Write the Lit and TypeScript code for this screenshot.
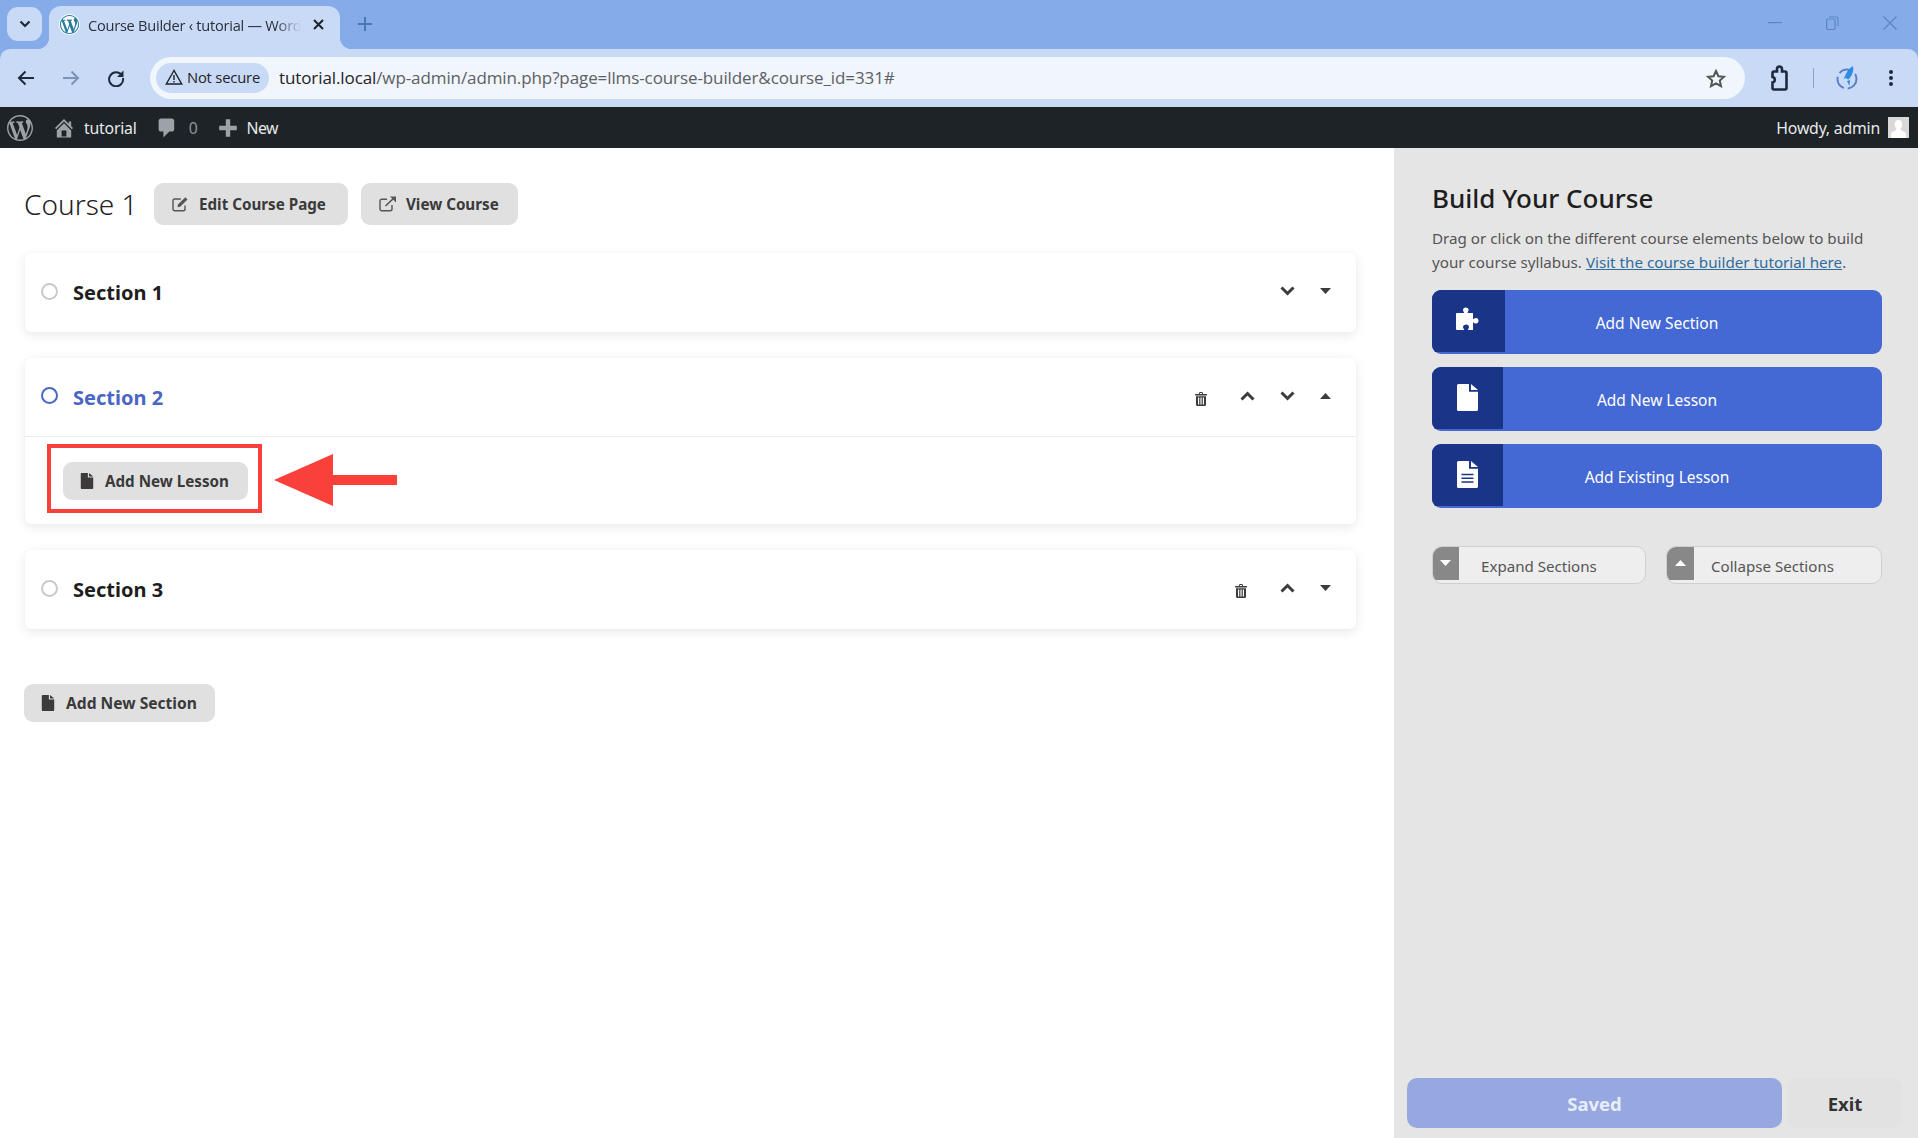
import { LitElement, html, css, svg } from "lit";
import { customElement } from "lit/decorators.js";

const WP = svg`<path d="M20 10c0-5.51-4.49-10-10-10C4.48 0 0 4.49 0 10c0 5.52 4.48 10 10 10 5.51 0 10-4.48 10-10zM7.78 15.37L4.37 6.22c.55-.02 1.17-.08 1.17-.08.5-.06.44-1.13-.06-1.11 0 0-1.45.11-2.37.11-.18 0-.37 0-.58-.01C4.12 2.69 6.87 1.11 10 1.11c2.33 0 4.45.87 6.05 2.34-.68-.11-1.65.39-1.65 1.58 0 .74.45 1.36.9 2.1.35.61.55 1.36.55 2.46 0 1.49-1.4 5-1.4 5l-3.03-8.37c.54-.02.82-.17.82-.17.5-.05.44-1.25-.06-1.22 0 0-1.44.12-2.38.12-.87 0-2.33-.12-2.33-.12-.5-.03-.56 1.2-.06 1.22l.92.08 1.26 3.41zM17.41 10c.24-.64.74-1.87.43-4.25.7 1.29 1.05 2.71 1.05 4.25 0 3.29-1.73 6.24-4.4 7.78.97-2.59 1.94-5.2 2.92-7.78zM6.1 18.09C3.12 16.65 1.11 13.53 1.11 10c0-1.3.23-2.48.72-3.59C3.25 10.3 4.67 14.2 6.1 18.09zm4.03-6.63l2.58 6.98c-.86.29-1.76.45-2.71.45-.79 0-1.57-.11-2.29-.33.81-2.38 1.62-4.74 2.42-7.1z"/>`;

const fileIcon = (w: number, h: number, fill: string) => html`<svg width=${w} height=${h} viewBox="0 0 14 18"><path fill=${fill} d="M1 0h7v5.2h6V17a1 1 0 0 1-1 1H1a1 1 0 0 1-1-1V1a1 1 0 0 1 1-1zM9.3 0L14 4H9.3z"/></svg>`;
const fileLines = html`<svg width="23" height="27" viewBox="0 0 14 18"><path fill="#fff" fill-rule="evenodd" d="M1 0h7v5.2h6V17a1 1 0 0 1-1 1H1a1 1 0 0 1-1-1V1a1 1 0 0 1 1-1zM3 8.5v1h8v-1zM3 11v1h8v-1zM3 13.5v1h8v-1zM9.3 0L14 4H9.3z"/></svg>`;
const puzzle = html`<svg width="25" height="24" viewBox="0 0 25 24"><path fill="#fff" d="M1 6h6.6c.5 0 .6-.4.3-.8C7.3 4.500 7 3.900 7 3.100 7 1.400 8.200.5 9.800.5s2.800.9 2.800 2.600c0 .8-.3 1.400-.9 2.100-.3.400-.2.800.3.800H17v5.600c0 .5.400.6.800.3.700-.6 1.300-.9 2.100-.9 1.700 0 2.600 1.200 2.600 2.800s-.9 2.800-2.600 2.800c-.8 0-1.400-.3-2.100-.9-.4-.3-.8-.2-.8.3V23h-4.600c-.5 0-.6-.4-.3-.8.600-.7.900-1.300.9-2.100 0-1.700-1.200-2.600-2.800-2.600S7 18.400 7 20.100c0 .8.300 1.400.900 2.100.3.400.2.800-.3.800H1a1 1 0 0 1-1-1V7a1 1 0 0 1 1-1z"/></svg>`;
const chevUp = html`<svg class="ic" width="15" height="10" viewBox="0 0 15 10"><polyline points="1.500,8.500 7.500,2.500 13.500,8.500" fill="none" stroke="#3c3c3c" stroke-width="3"/></svg>`;
const chevDown = html`<svg class="ic" width="15" height="10" viewBox="0 0 15 10"><polyline points="1.500,1.500 7.500,7.500 13.500,1.500" fill="none" stroke="#3c3c3c" stroke-width="3"/></svg>`;
const caretUp = html`<svg class="ic" width="11" height="6" viewBox="0 0 11 6"><path fill="#3c3c3c" d="M0 6L5.500 0 11 6z"/></svg>`;
const caretDown = html`<svg class="ic" width="11" height="6" viewBox="0 0 11 6"><path fill="#3c3c3c" d="M0 0h11L5.500 6z"/></svg>`;
const trash = html`<svg class="ic trash" width="12" height="14" viewBox="0 0 12 14"><path fill="#3c3c3c" fill-rule="evenodd" d="M4 1.500C4 .6 4.600 0 5.200 0h1.600C7.400 0 8 .6 8 1.500V2h3.500a.5.500 0 0 1 .5.500V3.500H0V2.500A.5.500 0 0 1 .5 2H4zM5 2h2V1.300c0-.2-.1-.3-.3-.3H5.300c-.2 0-.3.100-.3.300zM1 4.200h10V12.800c0 .7-.5 1.200-1.100 1.200H2.100C1.500 14 1 13.500 1 12.800zM3 5.500v7h1.200v-7zM5.400 5.500v7h1.200v-7zM7.800 5.500v7H9v-7z"/></svg>`;
const editIcon = html`<svg width="17" height="16" viewBox="0 0 17 16"><path fill="none" stroke="#555" stroke-width="1.400" d="M13 9.500V13a1.800 1.800 0 0 1-1.800 1.800H2.800A1.800 1.800 0 0 1 1 13V4.800A1.800 1.800 0 0 1 2.800 3h6"/><path fill="#555" d="M6 8.500L13.300 1.200l2.200 2.200L8.200 10.700 5.600 11.200z"/></svg>`;
const extIcon = html`<svg width="18" height="16" viewBox="0 0 18 16"><path fill="none" stroke="#555" stroke-width="1.400" d="M13 9v4a1.800 1.800 0 0 1-1.800 1.800H2.800A1.800 1.800 0 0 1 1 13V5a1.800 1.800 0 0 1 1.800-1.800H8"/><path fill="none" stroke="#555" stroke-width="1.600" d="M6.500 10L15.500 1.500"/><path fill="#555" d="M11 .5h6v6z"/></svg>`;

type Sec = { name: string; active?: boolean; acts: unknown[]; body?: boolean };
const SECTIONS: Sec[] = [
  { name: "Section 1", acts: [chevDown, caretDown] },
  { name: "Section 2", active: true, acts: [trash, chevUp, chevDown, caretUp], body: true },
  { name: "Section 3", acts: [trash, chevUp, caretDown] },
];

@customElement("app-root")
export class AppRoot extends LitElement {
  static styles = css`
    :host { display: flex; flex-direction: column; width: 1918px; height: 1138px; overflow: hidden; background: #fff;
      font-family: "Noto Sans", "Open Sans", "Liberation Sans", sans-serif; color: #333; }
    svg { display: block; flex: none; }

    .chrome { background: #85ace9; font-family: "Open Sans", "Noto Sans", sans-serif; }
    .strip { height: 49px; display: flex; align-items: flex-start; padding-left: 7px; }
    .tabs-btn { width: 35px; height: 34px; margin-top: 7px; border-radius: 11px; background: #c9daf7; display: flex; align-items: center; justify-content: center; }
    .tab { position: relative; width: 291px; height: 43px; margin: 6px 0 0 7px; background: #c9daf7; border-radius: 12px 12px 0 0; display: flex; align-items: center; padding: 0 0 6px 10px; box-sizing: border-box; font-size: 14.600px; color: #2a2f38; }
    .tab::before, .tab::after { content: ""; position: absolute; bottom: 0; width: 12px; height: 12px; }
    .tab::before { left: -12px; background: radial-gradient(circle at 0 0, transparent 12px, #c9daf7 12.500px); }
    .tab::after { right: -12px; background: radial-gradient(circle at 100% 0, transparent 12px, #c9daf7 12.500px); }
    .tab-title { width: 213px; margin-left: 8px; white-space: nowrap; overflow: hidden; letter-spacing: -.25px;
      -webkit-mask-image: linear-gradient(90deg, #000 88%, transparent); mask-image: linear-gradient(90deg, #000 88%, transparent); }
    .tab-x { margin-left: 12px; }
    .newtab { margin: 17px 0 0 18px; }
    .winctl { margin-left: auto; display: flex; align-items: center; height: 46px; padding-right: 21px; }
    .winctl svg + svg { margin-left: 44px; }

    .toolbar { height: 58px; background: #c9daf7; border-radius: 10px 10px 0 0; display: flex; align-items: center; padding-left: 17px; box-sizing: border-box; }
    .nav + .nav { margin-left: 27px; }
    .omni { flex: none; width: 1595px; height: 42px; margin-left: 25px; background: #f1f5fc; border-radius: 21px; display: flex; align-items: center; padding: 0 19px 0 6px; box-sizing: border-box; }
    .pill { width: 113px; height: 30px; background: #c9daf7; border-radius: 15px; display: flex; align-items: center; justify-content: center; gap: 4px; font-size: 14.800px; color: #1f2328; letter-spacing: -.2px; white-space: nowrap; padding-bottom: 2px; box-sizing: border-box; }
    .url { margin-left: 10px; font-size: 17px; letter-spacing: -.1px; color: #5c6066; white-space: nowrap; flex: 1; padding-bottom: 1px; }
    .url b { font-weight: 400; color: #1f2328; }
    .tools { display: flex; align-items: center; margin-left: 24px; flex: none; }
    .sep { width: 1px; height: 20px; background: #8aa3c8; margin: 0 22px; }

    .wpbar { height: 41px; background: #1d2327; display: flex; align-items: center; padding: 0 9px 0 7px; color: #e8eaeb; font-size: 15.800px; flex: none; }
    .wpbar .t { white-space: nowrap; letter-spacing: -.2px; padding-top: 1px; }
    .right-bar { margin-left: auto; display: flex; align-items: center; gap: 8px; }
    .avatar { width: 21px; height: 21px; background: #d8d8d8; overflow: hidden; }

    .main { flex: 1; display: flex; min-height: 0; }
    .left { width: 1394px; flex: none; box-sizing: border-box; padding: 35px 38px 0 25px; }
    .head { display: flex; align-items: center; height: 42px; }
    .head h1 { margin: 0 0 0 -1px; font-size: 28px; font-weight: 300; color: #222; line-height: 42px; width: 130px; white-space: nowrap; }
    .btn { display: inline-flex; align-items: center; background: #e0e0e0; border-radius: 9px; font-weight: 700; font-size: 15.200px; color: #3a3a3a; white-space: nowrap; box-sizing: border-box; }
    .head .btn { height: 42px; padding-left: 18px; }
    .head .edit { width: 194px; gap: 10px; }
    .head .view { width: 157px; gap: 9px; margin-left: 13px; }

    .cards { display: flex; flex-direction: column; gap: 26px; margin-top: 28px; }
    .card { background: #fff; border-radius: 6px; box-shadow: 0 3px 12px rgba(0,0,0,.09), 0 0 2px rgba(0,0,0,.04); }
    .row { height: 79px; display: flex; align-items: center; padding: 0 25px 0 16px; box-sizing: border-box; }
    .has-body .row { border-bottom: 1px solid #ececec; }
    .radio { width: 17px; height: 17px; box-sizing: border-box; border: 2px solid #c9c9c9; border-radius: 50%; margin-top: -3px; }
    .name { margin-left: 15px; font-size: 20px; font-weight: 700; color: #1e1e1e; }
    .active .radio { border-color: #4a66c4; }
    .active .name { color: #4a66c4; }
    .acts { margin-left: auto; display: flex; align-items: center; gap: 25px; margin-top: -3px; }
    .trash { margin-right: 8px; margin-top: 6px; }

    .body { position: relative; height: 87px; box-sizing: border-box; padding: 25px 0 0 38px; }
    .body .btn, .add-sec { height: 38px; }
    .body .btn { width: 185px; padding-left: 17px; gap: 11px; }
    .mark { position: absolute; left: 22px; top: 7px; width: 215px; height: 69px; box-sizing: border-box; border: 4px solid #f9403a; }
    .arrow { position: absolute; left: 249px; top: 17px; }
    .cards + .add-sec { width: 191px; margin-top: 55px; margin-left: -1px; padding-left: 17px; gap: 11px; font-size: 15.600px; }

    .panel { flex: 1; background: #e5e5e5; box-sizing: border-box; padding: 33px 36px 10px 38px; display: flex; flex-direction: column; }
    .panel h2 { margin: 0; font-size: 26px; font-weight: 500; color: #1e1e1e; line-height: 34px; white-space: nowrap; }
    .panel p { margin: 11px 0 0; font-size: 15.200px; line-height: 24px; color: #555; }
    .panel a { color: #2f6c9e; text-decoration: underline; }
    .blocks { display: flex; flex-direction: column; gap: 13px; margin-top: 16px; }
    .block { height: 64px; background: #4569d4; border-radius: 9px; overflow: hidden; display: flex; color: #fff; font-size: 15.500px; }
    .block .ico { width: 71px; background: #1a3488; display: flex; justify-content: center; padding-top: 17px; box-sizing: border-box; flex: none; margin-bottom: 2px; }
    .block.first .ico { width: 73px; }
    .block .lbl { flex: 1; display: flex; align-items: center; justify-content: center; margin-left: -71px; padding-top: 2px; box-sizing: border-box; }
    .block.first .lbl { margin-left: -73px; }
    .toggles { display: flex; justify-content: space-between; margin-top: 38px; }
    .tog { height: 38px; background: #eeeeee; border: 1px solid #cfcfcf; border-radius: 10px; display: flex; box-sizing: border-box; overflow: hidden; font-size: 15.100px; color: #555; }
    .tog .sq { background: #888; height: 34px; margin: -1px 0 0 -1px; display: flex; align-items: center; justify-content: center; flex: none; }
    .tog .lb { align-self: center; white-space: nowrap; padding-top: 1px; }
    .t1 { width: 214px; } .t1 .sq { width: 27px; } .t1 .lb { margin-left: 22px; }
    .t2 { width: 216px; } .t2 .sq { width: 28px; } .t2 .lb { margin-left: 17px; }
    .foot { margin: auto -20px 0 -25px; display: flex; gap: 6px; }
    .saved, .exit { height: 50px; border-radius: 10px; display: flex; align-items: center; justify-content: center; font-size: 18.500px; font-weight: 700; }
    .saved { width: 375px; background: #96a8df; color: #e8edf9; }
    .exit { width: 114px; background: #e2e2e2; color: #333; }
  `;

  renderChrome() {
    return html`<div class="chrome">
      <div class="strip">
        <div class="tabs-btn"><svg width="12" height="8" viewBox="0 0 12 8"><polyline points="1.500,1.500 6,6 10.500,1.500" fill="none" stroke="#1f2a3a" stroke-width="2.200"/></svg></div>
        <div class="tab">
          <svg width="21" height="21" viewBox="-1 -1 22 22"><circle cx="10" cy="10" r="11" fill="#fff"/><g fill="#2b7c9e">${WP}</g></svg>
          <span class="tab-title">Course Builder ‹ tutorial — WordPress</span>
          <svg class="tab-x" width="11" height="11" viewBox="0 0 11 11"><path d="M1 1l9 9M10 1l-9 9" stroke="#1f2328" stroke-width="2"/></svg>
        </div>
        <svg class="newtab" width="14" height="14" viewBox="0 0 14 14"><path d="M7 0v14M0 7h14" stroke="#4d76b4" stroke-width="2"/></svg>
        <div class="winctl">
          <svg width="14" height="2" viewBox="0 0 14 2"><rect width="14" height="1.200" fill="#5f85c0"/></svg>
          <svg width="13" height="14" viewBox="0 0 13 14" fill="none" stroke="#5f85c0" stroke-width="1.200"><rect x=".6" y="3" width="8.500" height="10.500" rx="1.500"/><path d="M3 1h7.500A1.500 1.500 0 0 1 12 2.500V10"/></svg>
          <svg width="14" height="14" viewBox="0 0 14 14"><path d="M.5.5l13 13M13.500.5l-13 13" stroke="#5f85c0" stroke-width="1.200"/></svg>
        </div>
      </div>
      <div class="toolbar">
        <svg class="nav" width="18" height="16" viewBox="0 0 18 16" fill="none" stroke="#1f2a3a" stroke-width="2"><path d="M17 8H2M8.500 1.500L2 8l6.500 6.500"/></svg>
        <svg class="nav" width="18" height="16" viewBox="0 0 18 16" fill="none" stroke="#7d93b4" stroke-width="2"><path d="M1 8h15M9.500 1.500L16 8l-6.500 6.500"/></svg>
        <svg class="nav" width="18" height="18" viewBox="0 0 18 18" fill="none" stroke="#1f2a3a" stroke-width="2"><path d="M15 6.500A7 7 0 1 0 16 9"/><path fill="#1f2a3a" stroke="none" d="M16.500 1.500V8H10z"/></svg>
        <div class="omni">
          <div class="pill"><svg width="18" height="16" viewBox="0 0 18 16" fill="none" stroke="#1f2328" stroke-width="1.400"><path d="M9 1.500L1.300 15h15.400z"/><path d="M9 6v5M9 12v1.500"/></svg>Not secure</div>
          <div class="url"><b>tutorial.local</b>/wp-admin/admin.php?page=llms-course-builder&amp;course_id=331#</div>
          <svg width="20" height="19" viewBox="0 0 20 19"><path fill="none" stroke="#555" stroke-width="2" d="M10 2l2.400 5.200 5.600.6-4.200 3.800 1.200 5.600L10 14.400 5 17.200l1.200-5.600L2 7.800l5.600-.6z"/></svg>
        </div>
        <div class="tools">
          <svg width="22" height="26" viewBox="0 0 22 26"><path fill="none" stroke="#1d2a3c" stroke-width="2.600" d="M5 6.500h3V4a2.500 2.500 0 0 1 5 0v2.500h3a1.500 1.500 0 0 1 1.500 1.500v15a1.500 1.500 0 0 1-1.500 1.500H5a1.500 1.500 0 0 1-1.500-1.500v-5.500a2.800 2.800 0 0 0 0-5.500V8A1.500 1.500 0 0 1 5 6.500z"/></svg>
          <div class="sep"></div>
          <svg width="22" height="24" viewBox="0 0 22 24"><circle cx="11" cy="13" r="9.500" fill="none" stroke="#5d7fc4" stroke-width="2" stroke-dasharray="14 4"/><path fill="#2f8be8" d="M17 0c1 5-1 10-4.500 13.500l-3-1.500-2 1 2-4C11 5 13.500 2 17 0z"/><path fill="#2f8be8" d="M11 15l3-1-.5 6z"/></svg>
          <svg width="4" height="16" viewBox="0 0 4 16" style="margin-left:31px"><g fill="#1d2a3c"><circle cx="2" cy="2" r="2"/><circle cx="2" cy="8" r="2"/><circle cx="2" cy="14" r="2"/></g></svg>
        </div>
      </div>
    </div>`;
  }

  renderWpBar() {
    return html`<div class="wpbar">
      <svg width="26" height="26" viewBox="0 0 20 20" fill="#9ca2a7">${WP}</svg>
      <svg width="24" height="24" viewBox="0 0 20 20" fill="#9ca2a7" style="margin-left:19px"><path d="M16 8.500l1.530 1.530-1.060 1.060L10 4.620l-6.470 6.470-1.060-1.060L10 2.500l4 4v-2h2v4zm-6-2.460l6 5.990V18H4v-5.970zM12 17v-5H8v5h4z"/></svg>
      <span class="t" style="margin-left:8px">tutorial</span>
      <svg width="24" height="24" viewBox="0 0 20 20" fill="#9ca2a7" style="margin-left:18px"><path d="M5 2h9c1.100 0 2 .9 2 2v7c0 1.100-.9 2-2 2h-2l-5 5v-5H5c-1.100 0-2-.9-2-2V4c0-1.100.9-2 2-2z"/></svg>
      <span class="t" style="margin-left:10px;color:#8f959a">0</span>
      <svg width="22" height="22" viewBox="0 0 20 20" fill="#9ca2a7" style="margin-left:19px"><path d="M18 8v4h-6v6H8v-6H2V8h6V2h4v6z"/></svg>
      <span class="t" style="margin-left:8px;letter-spacing:-.5px">New</span>
      <div class="right-bar"><span class="t">Howdy, admin</span>
        <div class="avatar"><svg width="21" height="21" viewBox="0 0 21 21"><path fill="#fff" d="M10.500 3c2.500 0 3.800 2 3.800 4.500 0 2-1 3.500-1.800 4.300 0 1.200 1 1.800 3 2.700 1.500.7 2.500 1.300 2.500 2.500V21H3v-4c0-1.200 1-1.800 2.500-2.500 2-.9 3-1.500 3-2.700C7.700 11 6.700 9.500 6.700 7.500 6.700 5 8 3 10.500 3z"/></svg></div>
      </div>
    </div>`;
  }

  renderLeft() {
    return html`<div class="left">
      <div class="head">
        <h1>Course 1</h1>
        <div class="btn edit">${editIcon}Edit Course Page</div>
        <div class="btn view">${extIcon}View Course</div>
      </div>
      <div class="cards">
        ${SECTIONS.map((s) => html`<div class="card ${s.active ? "active" : ""} ${s.body ? "has-body" : ""}">
          <div class="row">
            <div class="radio"></div>
            <div class="name">${s.name}</div>
            <div class="acts">${s.acts}</div>
          </div>
          ${s.body ? html`<div class="body">
            <div class="btn">${fileIcon(14, 16, "#3d3a3c")}Add New Lesson</div>
            <div class="mark"></div>
            <svg class="arrow" width="123" height="52" viewBox="0 0 123 52"><path fill="#f9403a" d="M0 26L59 0v21h64v10H59v21z"/></svg>
          </div>` : ""}
        </div>`)}
      </div>
      <div class="btn add-sec">${fileIcon(14, 16, "#3d3a3c")}Add New Section</div>
    </div>`;
  }

  renderPanel() {
    return html`<div class="panel">
      <h2>Build Your Course</h2>
      <p>Drag or click on the different course elements below to build your course syllabus. <a href="#">Visit the course builder tutorial here</a>.</p>
      <div class="blocks">
        <div class="block first"><div class="ico">${puzzle}</div><div class="lbl">Add New Section</div></div>
        <div class="block"><div class="ico">${fileIcon(23, 27, "#fff")}</div><div class="lbl">Add New Lesson</div></div>
        <div class="block"><div class="ico">${fileLines}</div><div class="lbl">Add Existing Lesson</div></div>
      </div>
      <div class="toggles">
        <div class="tog t1"><div class="sq"><svg width="11" height="6" viewBox="0 0 11 6"><path fill="#fff" d="M0 0h11L5.500 6z"/></svg></div><span class="lb">Expand Sections</span></div>
        <div class="tog t2"><div class="sq"><svg width="11" height="6" viewBox="0 0 11 6"><path fill="#fff" d="M0 6L5.500 0 11 6z"/></svg></div><span class="lb">Collapse Sections</span></div>
      </div>
      <div class="foot"><div class="saved">Saved</div><div class="exit">Exit</div></div>
    </div>`;
  }

  render() {
    return html`${this.renderChrome()}${this.renderWpBar()}
      <div class="main">${this.renderLeft()}${this.renderPanel()}</div>`;
  }
}
